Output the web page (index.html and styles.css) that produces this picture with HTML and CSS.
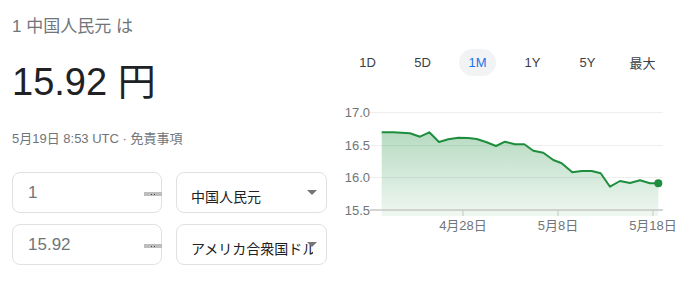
FILE: index.html
```html
<!DOCTYPE html>
<html lang="ja">
<head>
<meta charset="utf-8">
<link rel="stylesheet" href="styles.css">
</head>
<body>
<div class="page">
  <div class="left">
    <div class="from">1 中国人民元 は</div>
    <div class="result">15.92 円</div>
    <div class="date">5月19日 8:53 UTC · 免責事項</div>
    <div class="rows">
      <div class="row">
        <div class="num">1<span class="spin"><i></i><i></i></span></div>
        <div class="sel"><span class="sel-text">中国人民元</span><span class="arrow"></span></div>
      </div>
      <div class="row">
        <div class="num">15.92<span class="spin"><i></i><i></i></span></div>
        <div class="sel"><span class="sel-text">アメリカ合衆国ドル</span><span class="arrow"></span></div>
      </div>
    </div>
  </div>
  <div class="right">
    <div class="tabs">
      <div class="tab">1D</div>
      <div class="tab">5D</div>
      <div class="tab active"><span>1M</span></div>
      <div class="tab">1Y</div>
      <div class="tab">5Y</div>
      <div class="tab">最大</div>
    </div>
    <svg class="chart" width="339" height="140" viewBox="340 100 339 140">
      <defs>
        <linearGradient id="g" x1="0" y1="0" x2="0" y2="1">
          <stop offset="0" stop-color="#1e8e3e" stop-opacity="0.32"/>
          <stop offset="1" stop-color="#1e8e3e" stop-opacity="0.07"/>
        </linearGradient>
      </defs>
      <line x1="370" y1="112.5" x2="663" y2="112.5" stroke="#eeeeee"/>
      <line x1="370" y1="145.5" x2="663" y2="145.5" stroke="#eeeeee"/>
      <line x1="370" y1="177.5" x2="663" y2="177.5" stroke="#eeeeee"/>
      <path fill="url(#g)" d="M381.7,132.3 L393.3,132.3 L410,133.3 L420,136.7 L429.3,132.3 L439,142 L448.3,139.3 L458.3,137.7 L468.3,138 L476.7,139 L486.7,142.3 L496,146 L505,141.7 L515,144.3 L524.3,144.3 L533.3,150.7 L543.3,152.7 L553.3,160 L561.7,163.3 L572.3,172.3 L581.7,171 L591.7,171 L600.7,173.3 L610,186.7 L620,181 L630,183 L640,180.3 L650,183.3 L658.3,183.3 L658.3,216 L381.7,216 Z"/>
      <line x1="370" y1="210" x2="663" y2="210" stroke="#c4c7c5" stroke-width="1.5"/>
      <line x1="463" y1="210" x2="463" y2="216" stroke="#c4c7c5"/>
      <line x1="558" y1="210" x2="558" y2="216" stroke="#c4c7c5"/>
      <line x1="653" y1="210" x2="653" y2="216" stroke="#c4c7c5"/>
      <polyline fill="none" stroke="#1e8e3e" stroke-width="2" stroke-linejoin="round" points="381.7,132.3 393.3,132.3 410,133.3 420,136.7 429.3,132.3 439,142 448.3,139.3 458.3,137.7 468.3,138 476.7,139 486.7,142.3 496,146 505,141.7 515,144.3 524.3,144.3 533.3,150.7 543.3,152.7 553.3,160 561.7,163.3 572.3,172.3 581.7,171 591.7,171 600.7,173.3 610,186.7 620,181 630,183 640,180.3 650,183.3 658.3,183.3"/>
      <circle cx="658.3" cy="183.3" r="4" fill="#1e8e3e"/>
      <g class="ylab">
        <text x="370" y="116.5">17.0</text>
        <text x="370" y="149.5">16.5</text>
        <text x="370" y="182">16.0</text>
        <text x="370" y="214.5">15.5</text>
      </g>
      <g class="xlab">
        <text x="463" y="230">4月28日</text>
        <text x="558" y="230">5月8日</text>
        <text x="653" y="230">5月18日</text>
      </g>
    </svg>
  </div>
</div>
</body>
</html>
```
FILE: styles.css
```css
html, body {
  margin: 0;
  padding: 0;
  background: #ffffff;
}
body {
  font-family: "Liberation Sans", Arial, "Noto Sans CJK JP", sans-serif;
  color: #202124;
}
.page {
  display: flex;
  width: 679px;
  height: 282px;
}
.left {
  width: 340px;
  padding-left: 12px;
  box-sizing: border-box;
}
.from {
  margin-top: 16px;
  font-size: 17px;
  line-height: 22px;
  color: #70757a;
}
.result {
  margin-top: 22px;
  font-size: 38px;
  line-height: 44px;
  color: #202124;
}
.date {
  margin-top: 27px;
  font-size: 13px;
  line-height: 16px;
  color: #70757a;
}
.rows {
  margin-top: 25px;
  display: flex;
  flex-direction: column;
  gap: 11px;
}
.row {
  display: flex;
  gap: 14px;
}
.num, .sel {
  position: relative;
  height: 41px;
  box-sizing: border-box;
  border: 1px solid #dfe1e5;
  border-radius: 8px;
  display: flex;
  align-items: center;
}
.num {
  width: 150px;
  padding-left: 15px;
  font-size: 17px;
  color: #70757a;
}
.spin {
  position: absolute;
  right: -1px;
  top: 19px;
  width: 18px;
  height: 4px;
  background: #bdbdbd;
  display: flex;
  justify-content: center;
  align-items: center;
  gap: 2px;
}
.spin i {
  width: 1px;
  height: 1px;
  background: #444;
}
.sel {
  width: 151px;
  padding-left: 14px;
  padding-right: 13px;
  padding-top: 6px;
  font-size: 14px;
  color: #202124;
}
.sel-text {
  white-space: nowrap;
  overflow: hidden;
}
.arrow {
  position: absolute;
  right: 9px;
  top: 17px;
  width: 0;
  height: 0;
  border-left: 5px solid transparent;
  border-right: 5px solid transparent;
  border-top: 5px solid #757575;
}
.right {
  width: 339px;
  display: flex;
  flex-direction: column;
}
.tabs {
  display: flex;
  margin-top: 49px;
  height: 27px;
  width: 330px;
}
.tab {
  width: 55px;
  display: flex;
  justify-content: center;
  align-items: center;
  font-size: 13px;
  color: #3c4043;
}
.tab.active span {
  display: flex;
  align-items: center;
  justify-content: center;
  width: 37px;
  height: 27px;
  border-radius: 14px;
  background: #f1f3f4;
  color: #1a73e8;
}
.chart {
  display: block;
  margin-top: 24px;
}
.ylab text {
  font-size: 13px;
  fill: #70757a;
  text-anchor: end;
}
.xlab text {
  font-size: 13px;
  fill: #70757a;
  text-anchor: middle;
}
```
